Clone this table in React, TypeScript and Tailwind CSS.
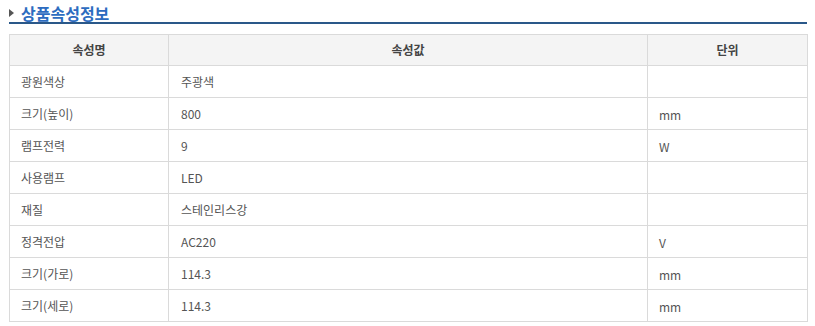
import React from "react";

const rows: [string, string, string][] = [
  ["광원색상", "주광색", ""],
  ["크기(높이)", "800", "mm"],
  ["램프전력", "9", "W"],
  ["사용램프", "LED", ""],
  ["재질", "스테인리스강", ""],
  ["정격전압", "AC220", "V"],
  ["크기(가로)", "114.3", "mm"],
  ["크기(세로)", "114.3", "mm"],
];

export default function App() {
  return (
    <div
      className="w-[815px] h-[326px] bg-white pl-[9px] pr-[8px] pt-[3px]"
      style={{ fontFamily: '"Noto Sans CJK KR", "Noto Sans", sans-serif' }}
    >
      <div className="flex items-center h-[19px]">
        <span
          className="w-0 h-0 border-t-[4px] border-b-[4px] border-l-[5px] border-t-transparent border-b-transparent border-l-[#555] mr-[7px]"
        />
        <span className="text-[16px] font-semibold text-[#2d6cc0] leading-none">상품속성정보</span>
      </div>
      <div className="h-[2px] bg-[#2a5889] mt-[0px]" />
      <table className="mt-[10px] w-[798px] border-collapse table-fixed text-[12px] text-[#555]">
        <colgroup>
          <col className="w-[159px]" />
          <col className="w-[479px]" />
          <col className="w-[160px]" />
        </colgroup>
        <thead>
          <tr className="h-[31px] bg-[#f4f4f4]">
            <th className="border border-[#dadada] font-bold text-[#444] text-center">속성명</th>
            <th className="border border-[#dadada] font-bold text-[#444] text-center">속성값</th>
            <th className="border border-[#dadada] font-bold text-[#444] text-center">단위</th>
          </tr>
        </thead>
        <tbody>
          {rows.map((r, i) => (
            <tr key={i} className="h-[32px]">
              <td className="border border-[#dadada] pl-[11px]">{r[0]}</td>
              <td className="border border-[#dadada] pl-[12px]">{r[1]}</td>
              <td className="border border-[#dadada] pl-[11px] pt-[2px]">{r[2]}</td>
            </tr>
          ))}
        </tbody>
      </table>
    </div>
  );
}
